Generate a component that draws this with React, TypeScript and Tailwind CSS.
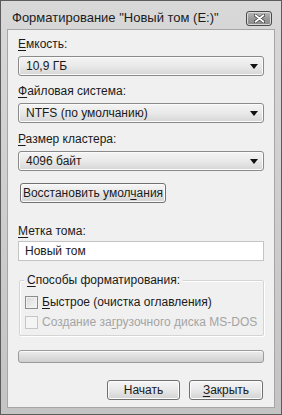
import React from "react";

function Key({ children }: { children: React.ReactNode }) {
  return <span className="underline underline-offset-[2px]">{children}</span>;
}

function Combo({ value }: { value: string }) {
  return (
    <div className="mt-[4px] flex h-[20px] items-center justify-between rounded-[3px] border border-[#8a8a8a] bg-linear-to-b from-[#f4f4f4] via-[#e9e9e9] to-[#d6d6d6] pl-[7px] pr-[5px] text-[#1a1a1a] shadow-[inset_0_0_0_1px_#fbfbfb]">
      <span>{value}</span>
      <svg width="8" height="5" viewBox="0 0 8 5">
        <path d="M0 0h8L4 5z" fill="#111" />
      </svg>
    </div>
  );
}

function PushButton({
  children,
  className
}: {
  children: React.ReactNode;
  className?: string;
}) {
  return (
    <div
      className={
        "flex h-[20px] items-center justify-center whitespace-nowrap rounded-[3px] border border-[#707070] bg-linear-to-b from-[#f6f6f6] via-[#e8e8e8] to-[#d2d2d2] text-[#1a1a1a] shadow-[inset_0_0_0_1px_#fcfcfc] " +
        (className ?? "")
      }
    >
      {children}
    </div>
  );
}

function CheckRow({
  label,
  disabled
}: {
  label: React.ReactNode;
  disabled?: boolean;
}) {
  return (
    <div className="flex items-center gap-[4px] whitespace-nowrap">
      <div
        className={
          disabled
            ? "h-[13px] w-[13px] shrink-0 border border-[#c6c6c6] bg-[#f4f4f4]"
            : "h-[13px] w-[13px] shrink-0 border border-[#8c8c8c] bg-linear-to-br from-[#dadada] to-[#f6f6f6] shadow-[inset_0_0_0_1px_#f2f2f2]"
        }
      />
      <span className={disabled ? "text-[#a4a4a4]" : "text-[#1a1a1a]"}>{label}</span>
    </div>
  );
}

export default function App() {
  return (
    <div className="flex h-[415px] w-[282px] flex-col border border-[#5c5c5c] bg-linear-to-b from-[#d8d8d8] to-[#c4c4c4] font-['Liberation_Sans',Arial,sans-serif] text-[12px] leading-[16px]">
      {/* title bar */}
      <div className="flex h-[28px] items-start justify-between pl-[11px] pr-[9px] pt-[8px]">
        <span className="whitespace-nowrap text-[13px] leading-[17px] text-[#1c1c1c]">
          Форматирование "Новый том (E:)"
        </span>
        <div className="mt-[2px] flex h-[15px] w-[26px] items-center justify-center rounded-[3px] border border-[#4a4a4a] bg-linear-to-b from-[#b8b8b8] via-[#9a9a9a] to-[#8a8a8a] shadow-[inset_0_0_0_1px_#d8d8d8]">
          <svg width="11" height="9" viewBox="0 0 11 9">
            <path
              d="M1 1l9 7M10 1L1 8"
              stroke="#3a3a3a"
              strokeWidth="3.2"
              strokeLinecap="round"
            />
            <path
              d="M1.5 1.3l8 6.4M9.5 1.3l-8 6.4"
              stroke="#fff"
              strokeWidth="1.8"
              strokeLinecap="round"
            />
          </svg>
        </div>
      </div>

      {/* client area */}
      <div className="mx-[6px] mb-[6px] flex flex-1 flex-col border border-[#a6a6a6] bg-[#f0f0f0] px-[10px] pt-[6px]">
        <div className="text-[#1a1a1a]">
          <Key>Е</Key>мкость:
        </div>
        <Combo value="10,9 ГБ" />

        <div className="mt-[7px] text-[#1a1a1a]">
          <Key>Ф</Key>айловая система:
        </div>
        <Combo value="NTFS (по умолчанию)" />

        <div className="mt-[8px] text-[#1a1a1a]">
          <Key>Р</Key>азмер кластера:
        </div>
        <Combo value="4096 байт" />

        <PushButton className="ml-[2px] mt-[12px] w-[146px]">
          <span>
            Восстановить умол<Key>ч</Key>ания
          </span>
        </PushButton>

        <div className="mt-[20px] text-[#1a1a1a]">
          <Key>М</Key>етка тома:
        </div>
        <div className="mt-[2px] flex h-[20px] items-center border border-[#c4c4c4] bg-white pl-[6px] text-[#1a1a1a]">
          Новый том
        </div>

        {/* group box */}
        <div className="relative ml-[1px] mt-[19px] flex h-[56px] flex-col gap-[4px] rounded-[2px] border border-[#d4d4d4] pl-[5px] pt-[13px] shadow-[inset_1px_1px_0_#fff,1px_1px_0_#fff]">
          <span className="absolute left-[4px] top-[-9px] whitespace-nowrap bg-[#f0f0f0] px-[3px] text-[#1a1a1a]">
            <Key>С</Key>пособы форматирования:
          </span>
          <CheckRow
            label={
              <>
                <Key>Б</Key>ыстрое (очистка оглавления)
              </>
            }
          />
          <CheckRow
            disabled
            label={
              <>
                Создание за<Key>г</Key>рузочного диска MS-DOS
              </>
            }
          />
        </div>

        {/* progress bar */}
        <div className="mt-[14px] h-[13px] rounded-[3px] border border-[#9a9a9a] bg-linear-to-b from-[#ececec] via-[#dedede] to-[#cfcfcf] shadow-[inset_0_1px_0_#fafafa]" />

        <div className="mt-[17px] flex justify-end gap-[9px] pr-[1px]">
          <PushButton className="w-[73px]">Начать</PushButton>
          <PushButton className="w-[74px]">
            <span>
              <Key>З</Key>акрыть
            </span>
          </PushButton>
        </div>
      </div>
    </div>
  );
}
